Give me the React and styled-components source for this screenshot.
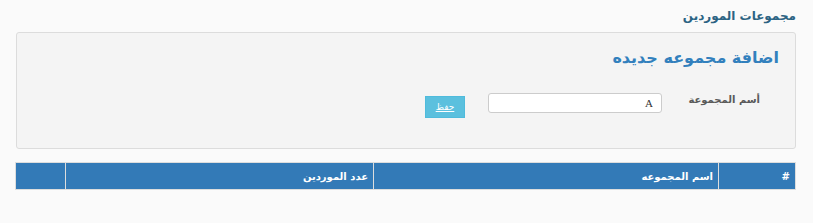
import styled, { createGlobalStyle } from "styled-components";

const GlobalStyle = createGlobalStyle`
  body {
    margin: 0;
    background: #fafafa;
    font-family: "DejaVu Sans", "Noto Sans", sans-serif;
  }
`;

const columns = [
  { key: "num", title: "#", width: 77 },
  { key: "name", title: "اسم المجموعه", width: 345 },
  { key: "count", title: "عدد الموردين", width: 308 },
  { key: "actions", title: "", width: 50 },
];

export default function App() {
  return (
    <>
      <GlobalStyle />
      <Page dir="rtl">
        <PageTitle>مجموعات الموردين</PageTitle>
        <Panel>
          <PanelHeading>اضافة مجموعه جديده</PanelHeading>
          <FormRow>
            <Label htmlFor="group">أسم المجموعة</Label>
            <Input id="group" type="text" defaultValue="A" />
            <SaveButton type="button">حفظ</SaveButton>
          </FormRow>
        </Panel>
        <Table>
          <thead>
            <tr>
              {columns.map((c) => (
                <Th key={c.key} $width={c.width}>
                  {c.title}
                </Th>
              ))}
            </tr>
          </thead>
        </Table>
      </Page>
    </>
  );
}

const Page = styled.div`
  padding: 0 17px 0 16px;
`;

const PageTitle = styled.div`
  height: 32px;
  line-height: 33px;
  font-size: 12px;
  font-weight: bold;
  color: #2c6383;
`;

const Panel = styled.div`
  box-sizing: border-box;
  height: 117px;
  background: #f4f4f4;
  border: 1px solid #dcdcdc;
  border-radius: 3px;
  padding: 13px 16px 0 16px;
`;

const PanelHeading = styled.h3`
  margin: 0;
  font-size: 16px;
  font-weight: bold;
  line-height: 24px;
  color: #3280bd;
`;

const FormRow = styled.div`
  display: flex;
  align-items: flex-start;
  margin-top: 23px;
  padding-right: 19px;
`;

const Label = styled.label`
  width: 98px;
  font-size: 10px;
  font-weight: bold;
  color: #5a5a5a;
  line-height: 14px;
`;

const Input = styled.input`
  box-sizing: border-box;
  width: 174px;
  height: 20px;
  border: 1px solid #ccc;
  border-radius: 3px;
  background: #fff;
  padding: 0 8px;
  font-family: "Liberation Serif", serif;
  font-size: 11px;
  color: #333;
  outline: none;
`;

const SaveButton = styled.button`
  box-sizing: border-box;
  width: 40px;
  height: 22px;
  margin-top: 3px;
  margin-right: 23px;
  background: #5bc0de;
  border: 1px solid #4fbbdc;
  border-radius: 0;
  color: #fff;
  font-family: "DejaVu Sans", sans-serif;
  font-size: 9px;
  text-decoration: underline;
  padding: 0;
  cursor: pointer;
`;

const Table = styled.table`
  margin-top: 13px;
  width: 780px;
  border-collapse: collapse;
  table-layout: fixed;
`;

const Th = styled.th`
  width: ${(p) => p.$width}px;
  height: 27px;
  box-sizing: border-box;
  background: #337ab7;
  border: 1px solid #dddddd;
  color: #fff;
  font-size: 10px;
  font-weight: bold;
  text-align: right;
  padding: 0 5px;
`;
